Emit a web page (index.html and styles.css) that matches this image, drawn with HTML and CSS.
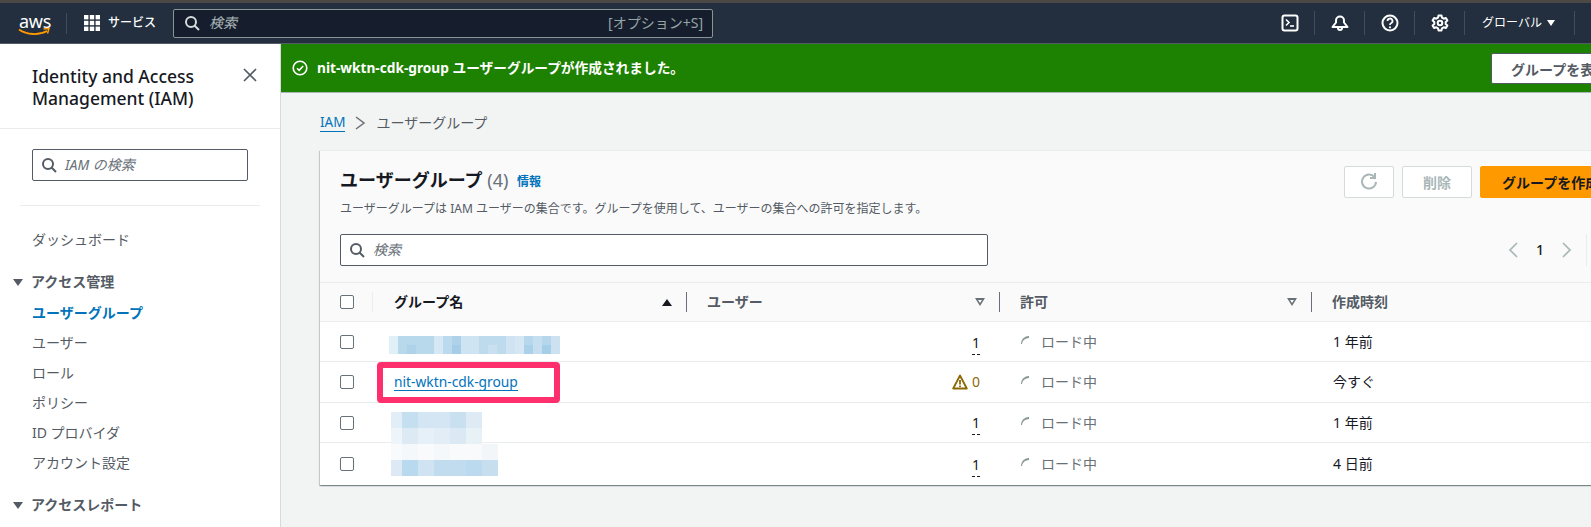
FILE: index.html
```html
<!DOCTYPE html>
<html lang="ja">
<head>
  <meta charset="UTF-8">
  <meta name="viewport" content="width=device-width, initial-scale=1.0">
  <title>IAM ユーザーグループ</title>
  <link rel="stylesheet" href="styles.css">
</head>
<body>
  <header class="topbar">
    <div class="logo">
      <span class="logo-text">aws</span>
      <svg class="logo-smile" width="32" height="9" viewBox="0 0 32 9"><path d="M1 1.500c8 5.500 20 6 28 1.500" fill="none" stroke="#f90" stroke-width="1.800"/><path d="M25.500 1l5.500-.5-1.500 5" fill="none" stroke="#f90" stroke-width="1.500"/></svg>
    </div>
    <div class="services">
      <svg width="16" height="16" viewBox="0 0 16 16" fill="#fff"><rect width="4.400" height="4.400"/><rect x="5.800" width="4.400" height="4.400"/><rect x="11.600" width="4.400" height="4.400"/><rect y="5.800" width="4.400" height="4.400"/><rect x="5.800" y="5.800" width="4.400" height="4.400"/><rect x="11.600" y="5.800" width="4.400" height="4.400"/><rect y="11.600" width="4.400" height="4.400"/><rect x="5.800" y="11.600" width="4.400" height="4.400"/><rect x="11.600" y="11.600" width="4.400" height="4.400"/></svg>
      <span>サービス</span>
    </div>
    <div class="top-search">
      <svg width="16" height="16" viewBox="0 0 16 16" fill="none" stroke="#d5dbdb" stroke-width="2"><circle cx="7" cy="7" r="5"/><path d="M10.500 10.500l4.500 4.500"/></svg>
      <span class="top-search-text">検索</span>
      <span class="top-search-key">[オプション+S]</span>
    </div>
    <div class="tools">
      <div class="tool">
        <svg width="18" height="18" viewBox="0 0 18 18" fill="none" stroke="#fff" stroke-width="2"><rect x="1.500" y="1.500" width="15" height="15" rx="2"/><path d="M5 5.500l3 3-3 3" stroke-width="1.600"/><path d="M9 12h4" stroke-width="1.600"/></svg>
      </div>
      <div class="tool">
        <svg width="18" height="18" viewBox="0 0 18 18" fill="none" stroke="#fff" stroke-width="2"><path d="M1.500 13h15L13 8.500V6.500a4 4 0 0 0-8 0v2z" stroke-linejoin="round"/><path d="M7 14a2 2 0 0 0 4 0"/></svg>
      </div>
      <div class="tool">
        <svg width="18" height="18" viewBox="0 0 18 18" fill="none" stroke="#fff" stroke-width="2"><circle cx="9" cy="9" r="7.500"/><path d="M6.500 7a2.500 2.500 0 1 1 3.500 2.300c-.7.300-1 .8-1 1.700" stroke-width="1.800"/><circle cx="9" cy="13.300" r="1.100" fill="#fff" stroke="none"/></svg>
      </div>
      <div class="tool">
        <svg width="18" height="18" viewBox="0 0 18 18" fill="none" stroke="#fff" stroke-width="2"><path d="M7.500 1.500h3l.5 2.200 1.700 1 2.200-.7 1.500 2.600-1.700 1.500v1.800l1.700 1.500-1.500 2.600-2.200-.7-1.700 1-.5 2.200h-3l-.5-2.200-1.700-1-2.200.7-1.500-2.600 1.700-1.500V8.100L1.600 6.600l1.500-2.600 2.200.7 1.700-1z" stroke-linejoin="round"/><circle cx="9" cy="9" r="2.300"/></svg>
      </div>
      <div class="tool tool-region">
        <span>グローバル</span>
        <i class="caret caret-white"></i>
      </div>
    </div>
  </header>

  <div class="layout">
    <aside class="sidebar">
      <div class="side-head">
        <h2>Identity and Access Management (IAM)</h2>
        <svg class="side-close" width="14" height="14" viewBox="0 0 14 14" fill="none" stroke="#545b64" stroke-width="1.700"><path d="M1 1l12 12M13 1L1 13"/></svg>
      </div>
      <div class="side-search">
        <svg width="16" height="16" viewBox="0 0 16 16" fill="none" stroke="#545b64" stroke-width="2"><circle cx="7" cy="7" r="5"/><path d="M10.500 10.500l4.500 4.500"/></svg>
        <span>IAM の検索</span>
      </div>
      <hr class="side-rule">
      <a class="side-link side-dash">ダッシュボード</a>
      <div class="side-section"><i class="caret"></i>アクセス管理</div>
      <a class="side-link side-active">ユーザーグループ</a>
      <a class="side-link">ユーザー</a>
      <a class="side-link">ロール</a>
      <a class="side-link">ポリシー</a>
      <a class="side-link">ID プロバイダ</a>
      <a class="side-link">アカウント設定</a>
      <div class="side-section side-section-last"><i class="caret"></i>アクセスレポート</div>
    </aside>

    <main class="main">
      <div class="flash">
        <svg width="16" height="16" viewBox="0 0 16 16" fill="none" stroke="#fff" stroke-width="1.600"><circle cx="8" cy="8" r="6.800"/><path d="M5 8.200l2.200 2.200L11.200 6"/></svg>
        <span class="flash-text">nit-wktn-cdk-group ユーザーグループが作成されました。</span>
        <button class="flash-btn">グループを表示</button>
      </div>

      <div class="content">
        <nav class="crumbs">
          <a>IAM</a>
          <svg width="12" height="14" viewBox="0 0 12 14" fill="none" stroke="#687078" stroke-width="1.500"><path d="M2 1l8 6-8 6"/></svg>
          <span>ユーザーグループ</span>
        </nav>

        <section class="card">
          <div class="card-head">
            <div class="card-top">
              <div>
                <h1>ユーザーグループ <span class="count">(4)</span> <a class="info">情報</a></h1>
                <p class="desc">ユーザーグループは IAM ユーザーの集合です。グループを使用して、ユーザーの集合への許可を指定します。</p>
              </div>
              <div class="actions">
                <button class="btn btn-icon">
                  <svg width="18" height="18" viewBox="0 0 18 18" fill="none" stroke="#aab7b8" stroke-width="2"><path d="M14.500 4.200A7 7 0 1 0 16 9"/><path d="M15 0v5h-5"/></svg>
                </button>
                <button class="btn btn-off">削除</button>
                <button class="btn btn-main">グループを作成</button>
              </div>
            </div>
            <div class="card-tools">
              <div class="table-search">
                <svg width="16" height="16" viewBox="0 0 16 16" fill="none" stroke="#545b64" stroke-width="2"><circle cx="7" cy="7" r="5"/><path d="M10.500 10.500l4.500 4.500"/></svg>
                <span>検索</span>
              </div>
              <div class="pager">
                <svg width="12" height="18" viewBox="0 0 12 18" fill="none" stroke="#aab7b8" stroke-width="1.700"><path d="M10 2L3 9l7 7"/></svg>
                <span>1</span>
                <svg width="12" height="18" viewBox="0 0 12 18" fill="none" stroke="#aab7b8" stroke-width="1.700"><path d="M2 2l7 7-7 7"/></svg>
                <i class="pager-sep"></i>
              </div>
            </div>
          </div>

          <div class="row row-head">
            <div class="hcell hcell-check"><i class="check"></i></div>
            <div class="hcell hcell-name"><b>グループ名</b><i class="sort-on"></i></div>
            <div class="hcell"><b>ユーザー</b><i class="sort-off"></i></div>
            <div class="hcell"><b>許可</b><i class="sort-off"></i></div>
            <div class="hcell hcell-last"><b>作成時刻</b></div>
          </div>

          <div class="row">
            <div class="cell"><i class="check"></i></div>
            <div class="cell cell-name">
              <svg class="mosaic mosaic-a" width="171" height="18" viewBox="0 0 19 2" shape-rendering="crispEdges">
                <rect x="0" width="1" height="2" fill="#e1eff8"/><rect x="1" width="4" height="2" fill="#b8d8ec"/><rect x="5" width="1" height="2" fill="#d6e8f4"/><rect x="6" width="1" height="2" fill="#bcdaed"/><rect x="7" width="1" height="2" fill="#aed2e9"/><rect x="8" width="2" height="2" fill="#cfe4f2"/><rect x="10" width="3" height="2" fill="#bedaed"/><rect x="13" width="1" height="2" fill="#cfe3f2"/><rect x="14" width="1" height="2" fill="#d6e7f4"/><rect x="15" width="1" height="2" fill="#b6d7ec"/><rect x="16" width="1" height="2" fill="#c6dff0"/><rect x="17" width="1" height="2" fill="#b6d6eb"/><rect x="18" width="1" height="2" fill="#cce2f1"/>
                <rect x="2" y="1" width="1" height="1" fill="#add2e9"/><rect x="7" y="1" width="1" height="1" fill="#a5cde7"/><rect x="11" y="1" width="1" height="1" fill="#cae0f0"/><rect x="15" y="1" width="1" height="1" fill="#abd1e9"/><rect x="17" y="1" width="1" height="1" fill="#a7cee8"/>
              </svg>
            </div>
            <div class="cell cell-users"><span class="num">1</span></div>
            <div class="cell cell-perm"><i class="spin"></i>ロード中</div>
            <div class="cell cell-time">1 年前</div>
          </div>

          <div class="row">
            <div class="cell"><i class="check"></i></div>
            <div class="cell cell-name">
              <a class="group-link">nit-wktn-cdk-group</a>
              <i class="mark"></i>
            </div>
            <div class="cell cell-users">
              <svg width="16" height="16" viewBox="0 0 16 16" fill="none" stroke="#8d6605" stroke-width="1.800"><path d="M8 1.500L1.200 14.500h13.600z" stroke-linejoin="round"/><path d="M8 6v4.500M8 11.500v1.500"/></svg>
              <span class="warn-num">0</span>
            </div>
            <div class="cell cell-perm"><i class="spin"></i>ロード中</div>
            <div class="cell cell-time">今すぐ</div>
          </div>

          <div class="row">
            <div class="cell"><i class="check"></i></div>
            <div class="cell cell-name">
              <svg class="mosaic mosaic-b" width="107" height="64" viewBox="0.3125 0 6.6875 4" shape-rendering="crispEdges">
                <rect x="0" y="0" width="1" height="1" fill="#e1eef7"/><rect x="1" y="0" width="1" height="1" fill="#c4dff0"/><rect x="2" y="0" width="2" height="1" fill="#d4e6f3"/><rect x="4" y="0" width="1" height="1" fill="#c8e0ef"/><rect x="5" y="0" width="1" height="1" fill="#deebf5"/>
                <rect x="0" y="1" width="1" height="1" fill="#edf4fa"/><rect x="1" y="1" width="1" height="1" fill="#dde9f3"/><rect x="2" y="1" width="1" height="1" fill="#e5f0f8"/><rect x="3" y="1" width="1" height="1" fill="#e3edf5"/><rect x="4" y="1" width="1" height="1" fill="#dbe9f4"/><rect x="5" y="1" width="1" height="1" fill="#e8f1f6"/>
                <rect x="0" y="2" width="7" height="1" fill="#f8fafc"/><rect x="1" y="2" width="1" height="1" fill="#f4f8fa"/><rect x="3" y="2" width="1" height="1" fill="#f5f8fa"/><rect x="6" y="2" width="1" height="1" fill="#f2f6f9"/>
                <rect x="0" y="3" width="1" height="1" fill="#dde9f5"/><rect x="1" y="3" width="1" height="1" fill="#b9d9ee"/><rect x="2" y="3" width="1" height="1" fill="#d0e3f2"/><rect x="3" y="3" width="2" height="1" fill="#c2dcef"/><rect x="5" y="3" width="1" height="1" fill="#bbdaef"/><rect x="6" y="3" width="1" height="1" fill="#c6deee"/>
              </svg>
            </div>
            <div class="cell cell-users"><span class="num">1</span></div>
            <div class="cell cell-perm"><i class="spin"></i>ロード中</div>
            <div class="cell cell-time">1 年前</div>
          </div>

          <div class="row row-last">
            <div class="cell"><i class="check"></i></div>
            <div class="cell cell-name"></div>
            <div class="cell cell-users"><span class="num">1</span></div>
            <div class="cell cell-perm"><i class="spin"></i>ロード中</div>
            <div class="cell cell-time">4 日前</div>
          </div>
        </section>
      </div>
    </main>
  </div>
</body>
</html>
```

FILE: styles.css
```css
*{margin:0;padding:0;box-sizing:border-box;}
html,body{width:1591px;height:527px;overflow:hidden;}
body{font-family:"Noto Sans","Noto Sans CJK JP",sans-serif;font-size:14px;line-height:20px;color:#16191f;background:#f2f3f3;}
i{display:block;}
button{font-family:inherit;}

/* top bar */
.topbar{height:44px;display:flex;align-items:center;background:#232f3e;border-top:3px solid #4b4846;border-bottom:1px solid #545b64;color:#fff;padding-left:19px;padding-right:16px;}
.logo{width:48px;height:21px;position:relative;border-right:1px solid #414d5c;flex:none;}
.logo-text{display:block;font-size:18px;line-height:16px;letter-spacing:-.3px;}
.logo-smile{position:absolute;left:-1px;top:15px;}
.services{display:flex;align-items:center;gap:8px;margin-left:17px;width:89px;font-size:12px;font-weight:500;flex:none;}
.top-search{width:540px;height:29px;display:flex;align-items:center;background:#161e2d;border:1px solid #879596;border-radius:2px;padding:0 9px 0 10px;flex:none;}
.top-search-text{font-style:italic;font-size:14px;color:#aab7b8;margin-left:9px;}
.top-search-key{margin-left:auto;font-size:14px;color:#95a5a6;}
.tools{display:flex;margin-left:auto;align-items:center;}
.tool{width:50px;height:24px;display:flex;align-items:center;justify-content:center;border-right:1px solid #414d5c;}
.tool-region{width:110px;gap:5px;justify-content:flex-start;padding-left:17px;font-size:12px;}
.caret{width:0;height:0;border-left:5px solid transparent;border-right:5px solid transparent;border-top:7px solid #545b64;}
.caret-white{border-top-color:#fff;border-left-width:4.500px;border-right-width:4.500px;border-top-width:6px;}

/* layout */
.layout{display:flex;height:483px;}
.sidebar{width:281px;flex:none;background:#fff;border-right:1px solid #d5dbdb;}
.main{flex:1;min-width:0;overflow:hidden;}

/* side navigation */
.side-head{height:85px;position:relative;padding:21px 50px 0 32px;border-bottom:1px solid #eaeded;}
.side-head h2{font-size:17.500px;line-height:22px;font-weight:500;color:#16191f;}
.side-close{position:absolute;right:23px;top:24px;}
.side-search{margin:20px 32px 0;height:32px;width:216px;display:flex;align-items:center;gap:8px;padding-left:8px;border:1px solid #545b64;border-radius:2px;font-style:italic;font-size:14px;color:#687078;}
.side-rule{border:0;border-top:1px solid #eaeded;margin:24px 20px 0;}
.side-link{display:block;height:30px;line-height:30px;padding-left:32px;color:#545b64;}
.side-dash{margin-top:19px;}
.side-active{color:#0073bb;font-weight:700;}
.side-section{display:flex;align-items:center;gap:8px;height:31px;padding-left:13px;padding-bottom:1px;font-weight:700;color:#545b64;margin-top:12px;}
.side-section-last{margin-top:12px;}

/* flash */
.flash{height:49px;display:flex;align-items:center;background:#1d8102;border-bottom:1px solid #aab7b8;color:#fff;padding-left:11px;position:relative;}
.flash-text{font-weight:700;font-size:13.700px;margin-left:9px;}
.flash-btn{position:absolute;left:1210px;top:9px;width:140px;height:31px;background:#fff;border:1px solid #545b64;border-radius:2px;color:#545b64;font-weight:700;font-size:14px;text-align:left;padding-left:19px;}

/* content */
.content{padding:20px 0 0 39px;width:1400px;}
.crumbs{display:flex;align-items:center;gap:9px;height:20px;color:#545b64;margin-bottom:17px;}
.crumbs a{color:#0073bb;border-bottom:1px solid #0073bb;line-height:17px;font-size:13.500px;}
.crumbs span{margin-left:1px;font-size:14px;}

.card{background:#fff;box-shadow:0 1px 1px 0 rgba(0,28,36,.3),1px 1px 1px 0 rgba(0,28,36,.15),-1px 1px 1px 0 rgba(0,28,36,.15);border-top:1px solid #eaeded;}
.card-head{height:132px;background:#fafafa;border-bottom:1px solid #eaeded;padding:13px 0 0 20px;}
.card-top{display:flex;justify-content:space-between;height:70px;}
.card-top h1{font-size:18px;line-height:32px;font-weight:700;color:#16191f;}
.count{font-weight:400;color:#687078;}
.info{font-size:12px;font-weight:700;color:#0073bb;vertical-align:1px;margin-left:4px;}
.desc{font-size:12px;line-height:20px;color:#545b64;margin-top:1px;}
.actions{display:flex;gap:8px;width:276px;flex:none;margin-right:61px;margin-top:2px;height:32px;}
.btn{height:32px;border-radius:2px;font-size:14px;font-weight:700;}
.btn-icon{width:50px;display:flex;align-items:center;justify-content:center;background:#fff;border:1px solid #d5dbdb;}
.btn-off{width:70px;background:#fff;border:1px solid #d5dbdb;color:#aab7b8;}
.btn-main{width:140px;flex:none;background:#ff9900;border:1px solid #ff9900;color:#16191f;text-align:left;padding-left:21px;}
.card-tools{display:flex;align-items:center;}
.table-search{width:648px;height:32px;display:flex;align-items:center;gap:8px;padding-left:8px;background:#fff;border:1px solid #545b64;border-radius:2px;font-style:italic;font-size:14px;color:#687078;}
.pager{display:flex;align-items:center;margin-left:auto;margin-right:94px;gap:17px;font-size:14px;font-weight:500;}
.pager-sep{width:1px;height:32px;background:#eaeded;margin-left:-4px;}

/* table */
.row{display:grid;grid-template-columns:53px 314px 313px 312px 1fr;height:40.330px;border-bottom:1px solid #eaeded;}
.row-last{border-bottom:0;height:42px;}
.row-head{height:39px;background:#fafafa;align-items:center;}
.hcell{height:20px;display:flex;align-items:center;justify-content:space-between;border-right:1px solid #687078;padding:0 14px 0 20px;color:#545b64;}
.hcell b{font-weight:700;font-size:14px;}
.hcell-check{border-right-color:#eaeded;padding:0 0 0 20px;}
.hcell-name b{color:#16191f;}
.hcell-name{padding-left:21px;}
.hcell-last{border-right:0;}
.check{width:14px;height:14px;background:#fff;border:1px solid #687078;border-radius:2px;}
.sort-on{width:0;height:0;border-left:5px solid transparent;border-right:5px solid transparent;border-bottom:7px solid #16191f;}
.sort-off{width:10px;height:8px;border-left:5px solid transparent;border-right:5px solid transparent;border-top:8px solid #687078;position:relative;}
.sort-off::after{content:"";position:absolute;left:-2px;top:-6px;border-left:2px solid transparent;border-right:2px solid transparent;border-top:3px solid #fafafa;}
.cell{display:flex;align-items:center;padding-left:20px;padding-top:1px;}
.cell-name{padding-left:21px;position:relative;}
.cell-users{justify-content:flex-end;padding-right:20px;gap:4px;}
.cell-perm{padding-left:21px;color:#687078;}
.cell-time{padding-left:21px;}
.num{border-bottom:1px dashed #16191f;line-height:19px;padding-bottom:2px;margin-top:3px;}
.warn-num{color:#8d6605;}
.group-link{color:#0073bb;font-size:13.800px;line-height:17px;border-bottom:1px solid #0073bb;}
.spin{width:8px;height:8px;border-top:2px solid #879596;border-left:1px solid #879596;border-radius:8px 0 0 0;margin-right:12px;margin-top:-4px;}
/* annotation and masks over the table */
.mark{position:absolute;left:4px;top:0;width:183px;height:41px;border:6px solid #ff2e6d;border-radius:4px;}
.mosaic{position:absolute;}
.mosaic-a{left:16px;top:14px;}
.mosaic-b{left:18px;top:9px;}
```
